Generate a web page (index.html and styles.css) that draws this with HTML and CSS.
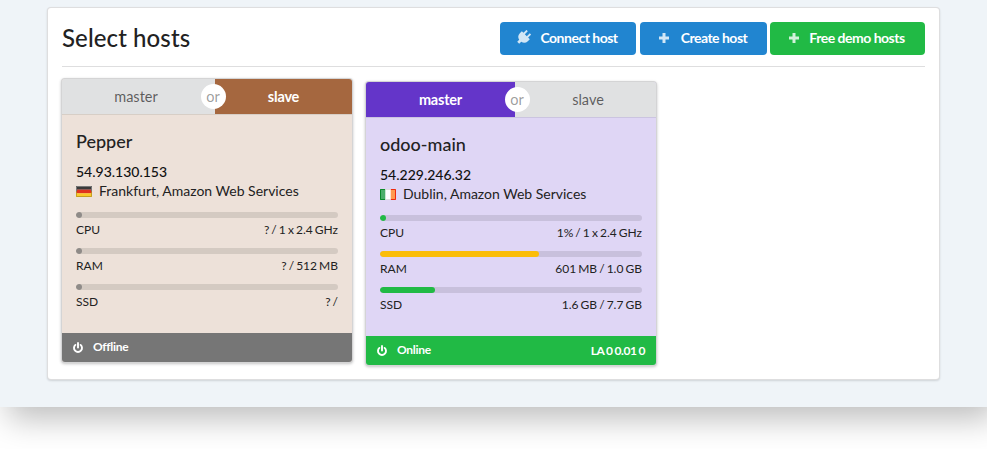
FILE: index.html
```html
<!DOCTYPE html>
<html lang="en">
<head>
<meta charset="utf-8">
<title>Select hosts</title>
<link rel="stylesheet" href="styles.css">
</head>
<body>
<div class="stage">
  <main class="panel">
    <header class="head">
      <h1 class="title">Select hosts</h1>
      <div class="actions">
        <button class="btn blue btn-connect"><svg class="ico" viewBox="0 0 16 16"><path transform="rotate(45 8 8)" d="M4.500 0h2v4.500h3V0h2v4.500h2.500v3a5.600 5.600 0 0 1-4.500 5.400V16h-3v-3.100A5.600 5.600 0 0 1 2 7.500v-3h2.500z"/></svg>Connect host</button>
        <button class="btn blue btn-create"><svg class="ico" viewBox="0 0 12 12"><path d="M4.500 1h3v3.500H11v3H7.500V11h-3V7.500H1v-3h3.500z"/></svg>Create host</button>
        <button class="btn green btn-free"><svg class="ico" viewBox="0 0 12 12"><path d="M4.500 1h3v3.500H11v3H7.500V11h-3V7.500H1v-3h3.500z"/></svg>Free demo hosts</button>
      </div>
    </header>
    <section class="cards">
      <article class="card card-slave">
        <div class="toggle">
          <div class="seg seg-off seg-l">master</div>
          <div class="seg seg-on seg-r">slave</div>
          <span class="or">or</span>
        </div>
        <div class="body">
          <h2 class="name">Pepper</h2>
          <div class="ip">54.93.130.153</div>
          <div class="loc">
            <svg class="flag" viewBox="0 0 16 11"><rect width="16" height="3.700" fill="#3a3a3a"/><rect y="3.700" width="16" height="3.700" fill="#e0321e"/><rect y="7.300" width="16" height="3.700" fill="#fbc92a"/><path d="M.5 5.500v-5h15v5" fill="none" stroke="#777"/><path d="M.5 5.500v5h15v-5" fill="none" stroke="#b8951e" stroke-opacity=".8"/></svg>
            <span>Frankfurt, Amazon Web Services</span>
          </div>
          <div class="metric">
            <div class="bar"><div class="fill fill-none"></div></div>
            <div class="row"><span>CPU</span><span>? / 1 x 2.4 GHz</span></div>
          </div>
          <div class="metric">
            <div class="bar"><div class="fill fill-none"></div></div>
            <div class="row"><span>RAM</span><span>? / 512 MB</span></div>
          </div>
          <div class="metric">
            <div class="bar"><div class="fill fill-none"></div></div>
            <div class="row"><span>SSD</span><span>? /</span></div>
          </div>
        </div>
        <footer class="foot foot-off">
          <span class="status"><svg class="power" viewBox="0 0 12 12"><path d="M6 1v4.500" stroke-width="1.900" stroke-linecap="round"/><path d="M3.400 2.900a4 4 0 1 0 5.200 0" stroke-width="1.900" stroke-linecap="round"/></svg><span class="status-text">Offline</span></span>
        </footer>
      </article>
      <article class="card card-master">
        <div class="toggle">
          <div class="seg seg-on seg-l">master</div>
          <div class="seg seg-off seg-r">slave</div>
          <span class="or">or</span>
        </div>
        <div class="body">
          <h2 class="name">odoo-main</h2>
          <div class="ip">54.229.246.32</div>
          <div class="loc">
            <svg class="flag" viewBox="0 0 16 11"><rect width="16" height="11" fill="#fff"/><rect width="5.300" height="11" fill="#4caf6a"/><rect x="10.700" width="5.300" height="11" fill="#ff9a50"/><path d="M5.300.5H.5v10h4.800" fill="none" stroke="#0b8a2a"/><path d="M10.700.5h4.800v10h-4.800" fill="none" stroke="#ee2a10"/><path d="M5.300.5h5.400M5.300 10.500h5.400" fill="none" stroke="#ddd"/></svg>
            <span>Dublin, Amazon Web Services</span>
          </div>
          <div class="metric">
            <div class="bar"><div class="fill fill-green" style="width:1%"></div></div>
            <div class="row"><span>CPU</span><span>1% / 1 x 2.4 GHz</span></div>
          </div>
          <div class="metric">
            <div class="bar"><div class="fill fill-yellow" style="width:60.700%"></div></div>
            <div class="row"><span>RAM</span><span>601 MB / 1.0 GB</span></div>
          </div>
          <div class="metric">
            <div class="bar"><div class="fill fill-green" style="width:21%"></div></div>
            <div class="row"><span>SSD</span><span>1.6 GB / 7.7 GB</span></div>
          </div>
        </div>
        <footer class="foot foot-on">
          <span class="status"><svg class="power" viewBox="0 0 12 12"><path d="M6 1v4.500" stroke-width="1.900" stroke-linecap="round"/><path d="M3.400 2.900a4 4 0 1 0 5.200 0" stroke-width="1.900" stroke-linecap="round"/></svg><span class="status-text">Online</span></span>
          <span class="la">LA 0 0.01 0</span>
        </footer>
      </article>
    </section>
  </main>
</div>
</body>
</html>
```

FILE: styles.css
```css
* { box-sizing: border-box; }
html, body { margin: 0; height: 449px; overflow: hidden; background: #fff; }
body { font-family: Lato, "Open Sans", sans-serif; color: rgba(0,0,0,.87); font-size: 14px; }

.stage {
  height: 407px;
  padding: 7px 47px 0;
  background: #eff4f8;
  box-shadow: 8px 12px 30px rgba(0,0,0,.26);
}

.panel {
  width: 893px;
  height: 373px;
  padding: 14px 14px 0;
  background: #fff;
  border: 1px solid rgba(34,36,38,.15);
  border-radius: 4px;
  box-shadow: 0 1px 2px rgba(34,36,38,.15);
}

.head {
  display: flex;
  justify-content: space-between;
  align-items: center;
  height: 45px;
  padding-bottom: 12px;
  border-bottom: 1px solid #dededf;
}
.title { margin: 0; font-size: 24px; line-height: 30px; font-weight: 500; color: #222; letter-spacing: .1px; }
.actions { display: flex; gap: 4px; }
.actions .btn-free { margin-left: -1px; }

.btn {
  display: flex;
  align-items: center;
  justify-content: center;
  height: 33px;
  padding: 0 2px 1px 0;
  border: 0;
  border-radius: 4px;
  color: #fff;
  font: 700 14px Lato, sans-serif;
  letter-spacing: -.5px;
}
.blue { background: #2185d0; }
.green { background: #21ba45; }
.btn-connect { width: 136px; }
.btn-create { width: 127px; }
.btn-free { width: 155px; }
.ico { width: 12px; height: 12px; margin-right: 11px; fill: rgba(255,255,255,.8); }
.btn-connect .ico { width: 15px; height: 15px; margin-right: 9px; }
.btn-free .ico { margin-right: 9px; }

.cards { display: flex; gap: 14px; margin-top: 12px; align-items: flex-start; }
.card {
  width: 290px;
  height: 283px;
  display: flex;
  flex-direction: column;
  border-radius: 3px;
  overflow: hidden;
  box-shadow: 0 0 0 1px #d4d4d5, 0 1px 3px 1px #c4c4c5;
}
.card-master { margin-top: 3px; }
.card-slave { background: #ede1d9; }
.card-master { background: #dfd6f5; }

.toggle { position: relative; display: flex; height: 36px; flex: none; border-bottom: 1px solid rgba(34,36,38,.1); }
.seg { display: flex; align-items: center; justify-content: center; font-size: 14.500px; }
.seg-off { background: #e0e1e2; color: rgba(0,0,0,.6); font-weight: 400; }
.seg-on { color: #fff; font-weight: 700; letter-spacing: -.2px; }
.card-slave .seg-on { background: #a5673f; }
.card-master .seg-on { background: #6435c9; }
.card-slave .seg-l { width: 153px; padding-right: 5px; }
.card-slave .seg-r { width: 137px; }
.card-master .seg-l { width: 149px; }
.card-master .seg-r { width: 141px; padding-left: 5px; }
.or {
  position: absolute;
  top: 5px;
  left: 139px;
  width: 25px;
  height: 25px;
  padding-right: 1px;
  border-radius: 50%;
  background: #fff;
  color: rgba(0,0,0,.4);
  font-size: 14.500px;
  line-height: 26px;
  text-align: center;
}

.body { flex: 1; padding: 14px 14px 0; }
.name { margin: 0; font-size: 18px; line-height: 24px; font-weight: 500; color: #222; }
.ip { margin-top: 10px; font-size: 14px; line-height: 18px; font-weight: 500; color: #111; }
.loc { display: flex; align-items: center; font-size: 14px; line-height: 20px; color: #222; }
.flag { width: 16px; height: 11px; margin-right: 7px; }
.metric { height: 36px; }
.loc + .metric { margin-top: 11px; }
.bar { height: 6px; border-radius: 3px; background: rgba(0,0,0,.1); overflow: hidden; }
.fill { height: 6px; min-width: 6px; border-radius: 3px; }
.fill-none { width: 6px; background: #8f8b88; }
.fill-green { background: #21ba45; }
.fill-yellow { background: #fbbd08; }
.row { display: flex; justify-content: space-between; margin-top: 3px; font-size: 12px; line-height: 18px; color: #222; word-spacing: -1px; }

.foot {
  flex: none;
  height: 29px;
  padding: 0 11px 0 10px;
  display: flex;
  align-items: center;
  justify-content: space-between;
  color: #fff;
  font-size: 12px;
  font-weight: 700;
  letter-spacing: -.3px;
}
.foot-off { background: #767676; }
.foot-on { background: #21ba45; }
.status { display: flex; align-items: center; }
.status-text { margin-bottom: 2px; }
.la { letter-spacing: -.4px; word-spacing: -.6px; }
.power { width: 12px; height: 12px; margin-right: 9px; fill: none; stroke: #fff; }
```
